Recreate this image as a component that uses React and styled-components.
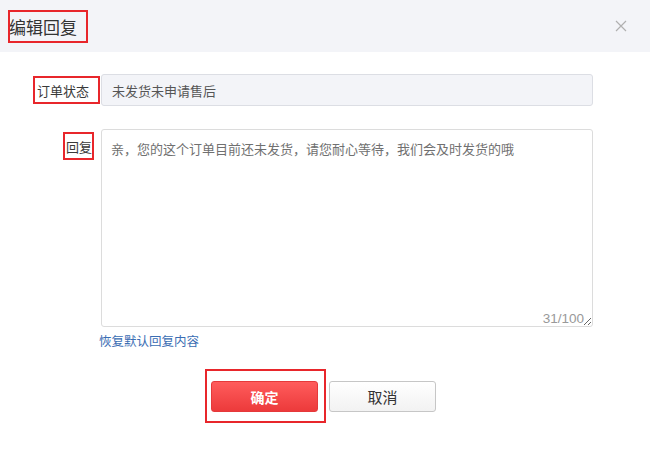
import React from "react";
import styled, { createGlobalStyle } from "styled-components";

const Global = createGlobalStyle`
  html, body { margin: 0; padding: 0; background: #fff; }
  body { font-family: "Noto Sans CJK SC", "Noto Sans", sans-serif; color: #333; }
  * { box-sizing: border-box; }
`;

const Page = styled.div`
  width: 650px;
  height: 460px;
  display: flex;
  flex-direction: column;
  background: #fff;
`;

const Header = styled.div`
  height: 52px;
  background: #f3f4f8;
  display: flex;
  align-items: center;
  justify-content: space-between;
  padding: 0 22px 0 8px;
`;

const Mark = styled.span`
  display: inline-flex;
  align-items: center;
  border: 2px solid #e8262b;
  height: ${(p) => p.$h}px;
  width: ${(p) => p.$w}px;
  padding-left: ${(p) => p.$pl || 0}px;
  white-space: nowrap;
  overflow: hidden;
`;

const Title = styled.span`
  font-size: 17px;
  color: #333;
  margin-left: -1px;
`;

const Close = styled.button`
  border: 0;
  background: none;
  padding: 0;
  width: 14px;
  height: 14px;
  display: flex;
  align-items: center;
  justify-content: center;
  cursor: pointer;
`;

const Form = styled.div`
  display: flex;
  flex-direction: column;
  padding-top: ${(p) => p.$top}px;
`;

const Row = styled.div`
  display: flex;
  align-items: ${(p) => p.$align || "center"};
  margin-bottom: ${(p) => p.$mb || 0}px;
`;

const LabelCell = styled.div`
  width: 100px;
  display: flex;
  justify-content: flex-end;
  padding-right: ${(p) => p.$pr || 0}px;
  padding-top: ${(p) => p.$pt || 0}px;
`;

const LabelText = styled.span`
  font-size: 13px;
  color: #3a3a3a;
  line-height: 1;
`;

const Field = styled.input`
  margin-left: 1px;
  width: 492px;
  height: 32px;
  background: #f3f4f8;
  border: 1px solid #dcdee4;
  border-radius: 3px;
  padding: 0 10px;
  font-family: inherit;
  font-size: 13px;
  color: #555;
  outline: none;
`;

const AreaWrap = styled.div`
  position: relative;
  margin-left: 1px;
  width: 492px;
  height: 198px;
`;

const Area = styled.textarea`
  width: 100%;
  height: 100%;
  border: 1px solid #dcdcdc;
  border-radius: 3px;
  padding: 9px 9px;
  font-family: inherit;
  font-size: 13px;
  line-height: 20px;
  color: #707070;
  resize: both;
  outline: none;
  background: #fff;
`;

const Counter = styled.span`
  position: absolute;
  right: 9px;
  bottom: 1px;
  font-family: "Liberation Sans", Arial, sans-serif;
  font-size: 13.5px;
  color: #999;
`;

const LinkRow = styled.div`
  padding-left: 99px;
  margin-top: 3px;
  line-height: 18px;
`;

const Link = styled.a`
  font-size: 12.5px;
  color: #3a6db3;
  text-decoration: none;
  cursor: pointer;
`;

const Actions = styled.div`
  display: flex;
  align-items: center;
  gap: 3px;
  padding-left: 205px;
  margin-top: 19px;
`;

const BtnMark = styled.div`
  border: 2px solid #e8262b;
  padding: 10px 6px 9px 4px;
  display: flex;
`;

const Button = styled.button`
  width: 107px;
  height: 31px;
  border-radius: 3px;
  font-family: inherit;
  font-size: ${(p) => (p.$primary ? 14 : 15)}px;
  font-weight: ${(p) => (p.$primary ? 700 : 400)};
  color: ${(p) => (p.$primary ? "#fff" : "#333")};
  border: 1px solid ${(p) => (p.$primary ? "#e5393b" : "#c6c6c6")};
  background: ${(p) =>
    p.$primary
      ? "linear-gradient(#ff5c5c, #ec3a3b)"
      : "linear-gradient(#ffffff, #f2f2f2)"};
  cursor: pointer;
`;

export default function App() {
  return (
    <Page>
      <Global />
      <Header>
        <Mark $w={80} $h={33}>
          <Title>编辑回复</Title>
        </Mark>
        <Close aria-label="关闭">
          <svg width="12" height="12" viewBox="0 0 12 12">
            <path d="M1 1L11 11M11 1L1 11" stroke="#b0b0b0" strokeWidth="1.2" />
          </svg>
        </Close>
      </Header>
      <Form $top={22}>
        <Row $mb={23}>
          <LabelCell>
            <Mark $w={67} $h={28} $pl={2}>
              <LabelText>订单状态</LabelText>
            </Mark>
          </LabelCell>
          <Field readOnly value="未发货未申请售后" />
        </Row>
        <Row $align="flex-start">
          <LabelCell $pr={6} $pt={3}>
            <Mark $w={31} $h={28} $pl={1}>
              <LabelText>回复</LabelText>
            </Mark>
          </LabelCell>
          <AreaWrap>
            <Area defaultValue="亲，您的这个订单目前还未发货，请您耐心等待，我们会及时发货的哦" />
            <Counter>31/100</Counter>
          </AreaWrap>
        </Row>
        <LinkRow>
          <Link>恢复默认回复内容</Link>
        </LinkRow>
        <Actions>
          <BtnMark>
            <Button $primary>确定</Button>
          </BtnMark>
          <Button>取消</Button>
        </Actions>
      </Form>
    </Page>
  );
}
